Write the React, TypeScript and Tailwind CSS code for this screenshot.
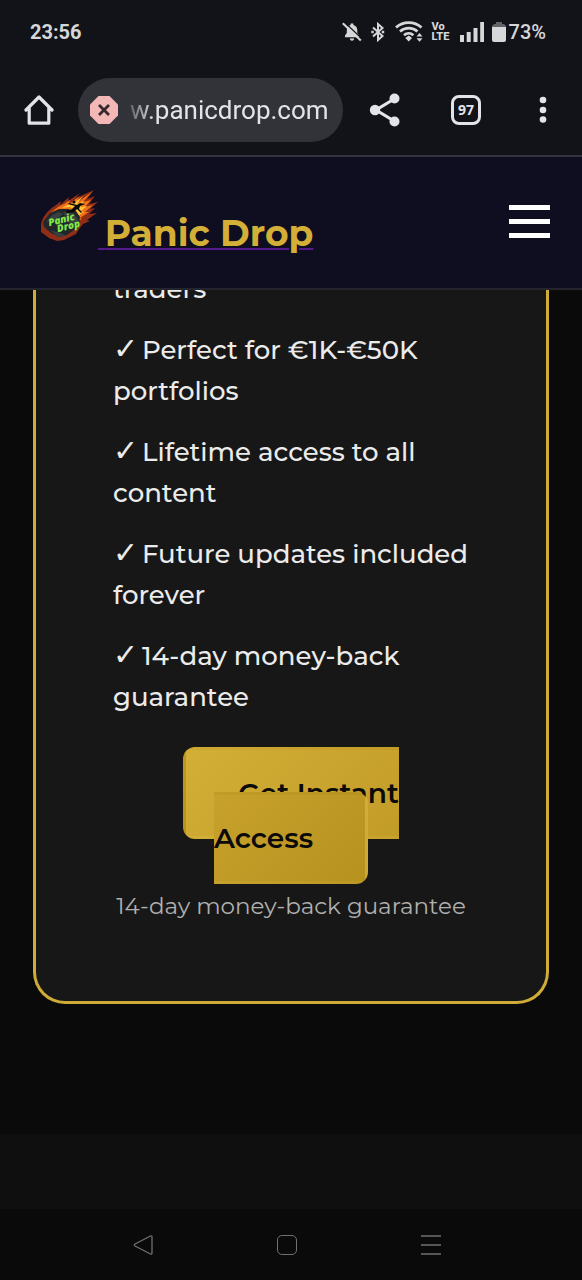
import React from "react";

const features = [
  "Perfect for €1K-€50K portfolios",
  "Lifetime access to all content",
  "Future updates included forever",
  "14-day money-back guarantee",
];

function StatusBar() {
  return (
    <div className="flex h-16 items-center justify-between pr-9 pl-[30px] font-['Roboto',sans-serif] text-[#d6d7d9]">
      <span className="text-xl font-bold">23:56</span>
      <div className="flex items-center">
        <svg className="h-5 w-5" viewBox="0 0 20 20" fill="currentColor" aria-hidden="true">
          <path d="M3 15.200v-1.700L4.800 11V8.200C4.800 5.300 6.300 3.600 8.600 3V1.500h2.800V3c2.300.6 3.900 2.400 3.900 5.200V11l1.700 2.500v1.700zM7.800 16.600h4.400c-.3 1.700-1 2.200-2.200 2.200s-1.900-.5-2.200-2.200z" />
          <path d="M2.600 .3 20 16.800" stroke="#121318" strokeWidth="1.300" />
          <path d="M.8 1.200 18.800 18.400" stroke="currentColor" strokeWidth="2.100" />
        </svg>
        <svg className="ml-2 h-5 w-4" viewBox="0 0 16 20" fill="none" stroke="currentColor" strokeWidth="2" aria-hidden="true">
          <path d="m3 5.500 9.500 8.500L8 18V2l4.500 4L3 14.500" />
          <path d="M1.300 10h2.400M11.800 10h2.400" strokeWidth="2.400" />
        </svg>
        <svg className="ml-2 h-6 w-8" viewBox="0 0 32 24" fill="none" stroke="currentColor" strokeWidth="2.700" aria-hidden="true">
          <path d="M2 8.500c7-6.500 18.500-6.500 25.500 0M6 12.500c5-4.500 12.500-4.500 17.500 0M10 16.200c2.800-2.400 6.600-2.400 9.400 0" transform="translate(0 -1)" />
          <path d="m11.300 18 3.400-2.400 3.400 2.400-3.400 3.600z" fill="currentColor" stroke="none" />
          <path d="m22.500 16.500 3-3.500 3 3.500zM22.500 18.200l3 3.500 3-3.500z" fill="currentColor" stroke="none" />
        </svg>
        <span className="ml-1.5 flex w-5 flex-col items-start text-[11px] leading-[10px] font-extrabold">
          <span>Vo</span>
          <span>LTE</span>
        </span>
        <svg className="ml-2 h-5 w-6" viewBox="0 0 24 20" fill="currentColor" aria-hidden="true">
          <path d="M0 13h4v7H0zM6.700 10h4v10h-4zM13.500 6h4v14h-4zM20.200 0h4v20h-4z" />
        </svg>
        <svg className="ml-2 h-5 w-[14px]" viewBox="0 0 14 20" aria-hidden="true">
          <path d="M4 0h6v2h2l2 2v3H0V4l2-2h2z" fill="#626367" />
          <path d="M0 5h14v13q0 2-2 2H2q-2 0-2-2z" fill="currentColor" />
        </svg>
        <span className="ml-[3px] text-xl font-medium">73%</span>
      </div>
    </div>
  );
}

function BrowserBar() {
  return (
    <div className="flex h-[93px] items-center border-b-2 border-[#33333f] pr-[31px] pl-6 text-[#e3e4ea]">
      <button type="button" aria-label="Home" className="h-8 w-[30px] shrink-0">
        <svg viewBox="0 0 30 32" fill="none" stroke="currentColor" strokeWidth="3.200" strokeLinejoin="round" strokeLinecap="round">
          <path d="M2 16 15 3l13 13M5.200 14v15.200h19.600V14" />
        </svg>
      </button>
      <div className="ml-6 flex h-16 min-w-0 flex-1 items-center rounded-full bg-[#323338] pr-2 pl-3">
        <svg className="h-7 w-7 shrink-0" viewBox="0 0 28 28" aria-hidden="true">
          <path d="M8.500 0h11L28 8.500v11L19.500 28h-11L0 19.500v-11z" fill="#f3b8b5" />
          <path d="m9 9 10 10M19 9 9 19" stroke="#35282c" strokeWidth="2.800" />
        </svg>
        <input
          aria-label="Address"
          readOnly
          defaultValue="w.panicdrop.com"
          className="ml-3 w-full min-w-0 bg-transparent mask-[linear-gradient(to_right,#0004,#000_24px)] pt-0.5 font-['Roboto',sans-serif] text-[26px]"
        />
      </div>
      <button type="button" aria-label="Share" className="ml-[26px] h-9 w-8 shrink-0">
        <svg viewBox="0 0 32 36" fill="currentColor">
          <path d="M26 6.500 7 18l19 11.500" fill="none" stroke="currentColor" strokeWidth="3.200" />
          <circle cx="25.500" cy="6.500" r="5" />
          <circle cx="6" cy="18" r="5.200" />
          <circle cx="25.500" cy="29.500" r="5" />
        </svg>
      </button>
      <button
        type="button"
        aria-label="Open tabs"
        className="ml-[50px] flex h-[30px] w-[30px] shrink-0 items-center justify-center rounded-lg border-3 border-current font-['Open_Sans',sans-serif] text-sm font-bold"
      >
        97
      </button>
      <button type="button" aria-label="More options" className="ml-[54px] h-8 w-4 shrink-0">
        <svg viewBox="0 0 16 32" fill="currentColor">
          <circle cx="8" cy="6" r="3.300" />
          <circle cx="8" cy="16" r="3.300" />
          <circle cx="8" cy="25.500" r="3.300" />
        </svg>
      </button>
    </div>
  );
}

function Logo() {
  return (
    <svg className="h-[58px] w-[58px] shrink-0" viewBox="0 0 58 58" aria-hidden="true">
      <path d="M1 37C1 29 8 21 16 16l5-4-1 4 9-8-1 4 12-8-4 5L54 1l-7 9 8-3-6 8 9-2-8 7 5-1-6 6 8-1-10 7 3 1-7 3-4 5-3 5-6 3-6 3-7 1-8-3-8-6z" fill="#8f2d17" />
      <path d="M4 34C8 24 17 18 24 15l6-4-1 4 11-8-5 8L52 3l-9 10 8-2-6 7 8-2-8 7 4 0-9 6 2 1-8 4-3-9-7-4-9 2z" fill="#ef7118" />
      <path d="m22 19 9-5-1 3 13-10-6 8 7-3-4 6 7-1-6 5 3 1-6 4-3-6-5-3z" fill="#ffc43b" />
      <path d="M3 33 10 24l9-4 9 0 8 2 4 6-1 7-5 6-7 5-8 2-8-4-7-6z" fill="#20262a" />
      <path d="m6 33 6-7 7-3 4 2-6 5-7 2zM23 23l10 1 5 6-2 7-7-3zM10 41l10 3 7 3-9 1z" fill="#394041" />
      <path d="m26 22 5-1 4-4-7-2 1-1 8 2 3-2 5 1-5 2-1 3 3 3-1 1-4-4-3 3-7 1z" fill="#070707" />
      <circle cx="34" cy="13" r="1.500" fill="#070707" />
      <g transform="rotate(-14 22 35)" fill="#82e94a" fontFamily="Open Sans, sans-serif" fontStyle="italic" fontWeight="800" fontSize="10">
        <text x="9" y="34">Panic</text>
        <text x="16" y="42">Drop</text>
      </g>
    </svg>
  );
}

function SiteHeader() {
  return (
    <header className="flex h-[133px] items-start justify-between border-b-2 border-[#24242f] bg-[#0e0e20] pr-8 pl-10">
      <a href="#home" className="mt-8 flex text-[#d4af37]">
        <Logo />
        <span className="mt-[19px] text-[26px] leading-[50px] whitespace-pre underline decoration-[#551a8b] decoration-2 underline-offset-2">
          {" "}
          <span className="text-4xl leading-[50px] font-bold">Panic Drop</span>
        </span>
      </a>
      <button type="button" aria-label="Menu" className="mt-12 flex w-[41px] flex-col gap-[9px]">
        <span className="h-[5px] w-full bg-white" />
        <span className="h-[5px] w-full bg-white" />
        <span className="h-[5px] w-full bg-white" />
      </button>
    </header>
  );
}

function PricingCard() {
  return (
    <section className="overflow-hidden pr-[33px] pb-[130px] pl-[33px]">
      <div className="rounded-b-[32px] border-3 border-t-0 border-[#cfab38] bg-[#171717] px-[77px] pb-[76px]">
        <ul className="-mt-[21px] flex flex-col gap-5 text-[26px] leading-[41px] font-medium text-[#ebebeb]">
          <li>traders</li>
          {features.map((feature) => (
            <li key={feature}>
              <span className="inline-block w-[22px] font-['DejaVu_Sans',sans-serif] text-3xl leading-[30px] font-bold italic">✓</span> {feature}
            </li>
          ))}
        </ul>
        <div className="mt-[53px] text-center">
          <p className="text-[28px] leading-[45px]">
            <a
              href="#buy"
              className="rounded-xl border-3 border-transparent bg-linear-135 from-[#d4af37] to-[#b8921e] px-[52px] py-[26px] font-semibold text-[#0a0a0a]"
            >
              Get Instant Access
            </a>
          </p>
          <p className="mt-[26px] text-[23px] leading-[38px] whitespace-nowrap text-[#b0b0b0]">14-day money-back guarantee</p>
        </div>
      </div>
    </section>
  );
}

function NavigationBar() {
  return (
    <nav className="flex h-[71px] items-center justify-between bg-[#0a0a0a] pr-[140px] pl-[132px] text-[#707070]">
      <button type="button" aria-label="Back" className="h-[22px] w-[22px]">
        <svg viewBox="0 0 22 22" fill="none" stroke="currentColor" strokeWidth="1.300" strokeLinejoin="round">
          <path d="M18.500 2Q20 1.500 20 3v16q0 1.500-1.500 1L3 12q-1.500-1 0-2z" />
        </svg>
      </button>
      <button type="button" aria-label="Home screen" className="h-5 w-5 rounded-[5px] border border-current" />
      <button type="button" aria-label="Recent apps" className="h-[22px] w-[22px]">
        <svg viewBox="0 0 22 22" fill="none" stroke="currentColor" strokeWidth="1.500">
          <path d="M1 2h20M1 11h20M1 20h20" />
        </svg>
      </button>
    </nav>
  );
}

export default function App() {
  return (
    <div className="flex min-h-screen flex-col bg-[#0a0a0a] font-['Montserrat','Inter',sans-serif]">
      <div className="bg-[#121318]">
        <StatusBar />
        <BrowserBar />
      </div>
      <SiteHeader />
      <main className="flex flex-1 flex-col">
        <PricingCard />
        <div className="min-h-[75px] flex-1 bg-[#0f0f0f]" />
      </main>
      <NavigationBar />
    </div>
  );
}
